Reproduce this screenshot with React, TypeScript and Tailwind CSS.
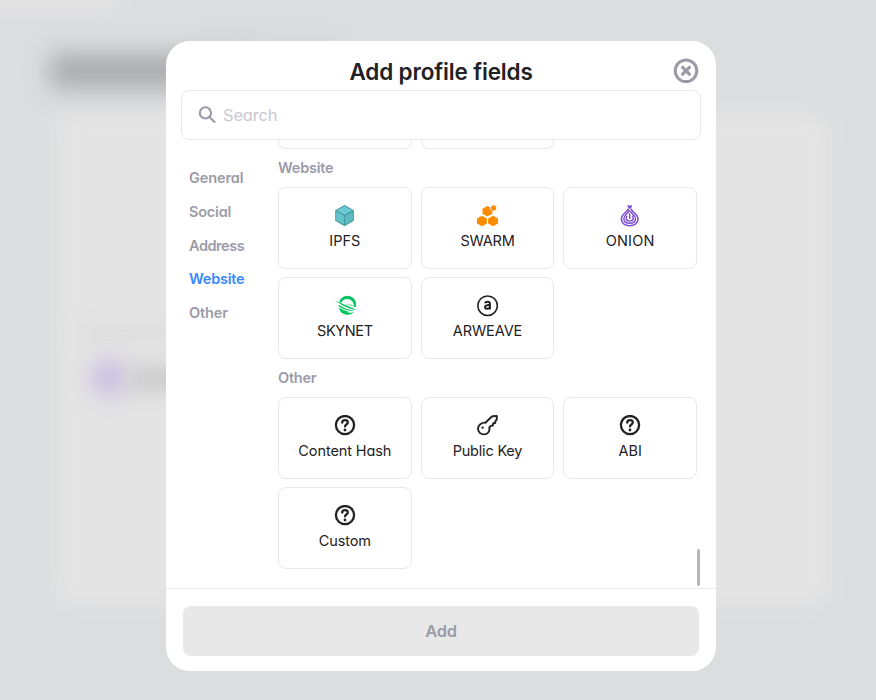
import type { ReactNode } from "react";

const Ipfs = () => (
  <svg width="22" height="22" viewBox="0 0 22 22">
    <path d="M10.5 0 19.9 5.2v10.6L10.5 21.2 1.2 15.8V5.2z" fill="#469ea2" />
    <path d="M10.5 1.2 18.2 5.5 10.5 9.8 2.8 5.5z" fill="#6acad1" />
    <path d="M2.2 6.5 9.9 10.9v8.6L2.2 15.1z" fill="#64c3ca" />
    <path d="M18.9 6.5 11.2 10.9v8.6l7.7-4.4z" fill="#5dbac1" />
  </svg>
);

const Swarm = () => (
  <svg width="22" height="22" viewBox="0 0 22 22" fill="#ff8b00">
    <path d="M5.9 10.7 10.9 13.5v5L5.9 21.2 1 18.5v-5z" />
    <path d="M17.1 10.7 22 13.5v5l-4.9 2.7-5-2.7v-5z" />
    <path d="m11.3 1 2.9 1.6c-.2 1.9.5 2.9 2.2 3.2v3l-5.1 2.8L6.5 8.8V3.8z" />
    <path d="m17.6 0 2.6 1.5v3l-2.6 1.5-2.6-1.5v-3z" />
  </svg>
);

const Onion = () => (
  <svg width="22" height="22" viewBox="0 0 22 22" fill="none" stroke="#7d4fd2" strokeWidth="1.6">
    <path d="M9.5 3.8C8.8 6.7 2.4 9 2.4 13.8c0 4.2 3.5 6.9 8.3 6.9s8.3-2.7 8.3-6.9c0-4.8-6.4-7.1-7.1-10M9 .2l1.1 2.7M12.5.2l-1.2 2.7M10.7.7v3" />
    <path d="M10.5 5.1C9.9 8 4.9 9.9 4.9 13.8c0 2.8 2.3 4.5 5.8 4.5s5.8-1.7 5.8-4.5c0-3.9-4.3-5-5.3-7.6" strokeWidth="1.4" />
    <path d="M10.7 8.6v5.4M8 10.8c-.5.8-.8 1.7-.8 2.8 0 1.6 1.4 2.5 3.5 2.5s3.5-.9 3.5-2.5c0-1.1-.4-2-1.1-2.8" strokeWidth="1.4" />
  </svg>
);

const Skynet = () => (
  <svg width="22" height="22" viewBox="0 0 22 22" fill="#00c65e">
    <path d="M5.2 7A8.6 8.6 0 0 1 21.8 12l-2-.5A6.7 6.7 0 0 0 7.1 7.8z" />
    <path d="M1 5.4 21.4 14.2l-.4.8C14.1 13.2 7.4 10.4 1 5.4z" />
    <path d="M4.7 9.8c4.3 3.2 9.4 4.6 14.4 5.7l-.3.7C13.3 15.1 8.6 13.9 4.7 11.4z" />
    <path d="M4.9 12.8c3.4 1.7 6.5 3.1 9.9 4l-.5.8c2.2.6 4.2.1 5.8-1A8.6 8.6 0 0 1 4.9 12.8z" />
    <path d="m11.2 8.9 2-.4 2 1 1.7-.3 3.8 2.3v.6z" opacity=".55" />
  </svg>
);

const Arweave = () => (
  <svg width="22" height="22" viewBox="0 0 22 22" fill="none" stroke="#222123">
    <circle cx="11.6" cy="10.7" r="9.75" strokeWidth="1.6" />
    <path d="M9 8.3C9.3 7.2 10.1 6.8 11.5 6.8c1.6 0 2.5.8 2.5 2.1v3.7c0 .7.2 1.2.7 1.4M13.8 9.8l-2.5.4c-1.6.2-2.3.7-2.3 1.8s.8 1.7 1.9 1.7c1.8 0 2.9-.9 2.9-2.3" strokeWidth="1.9" />
  </svg>
);

const Question = () => (
  <svg width="22" height="22" viewBox="0 0 22 22" fill="none" stroke="#222123" strokeLinecap="round" strokeLinejoin="round">
    <circle cx="11" cy="10.1" r="9.1" strokeWidth="2.3" />
    <path d="M8.2 7.5c.2-1.6 1.3-2.3 2.8-2.3 1.7 0 2.8.9 2.8 2.3 0 1.9-2.8 2-2.8 3.9" strokeWidth="2.3" />
    <circle cx="11" cy="15" r="1.4" fill="#222123" stroke="none" />
  </svg>
);

const Key = () => (
  <svg width="22" height="22" viewBox="0 0 22 22" fill="none" stroke="#222123" strokeWidth="1.9" strokeLinejoin="round">
    <path d="M9.4 7.7 15.9 1.5Q16.6.9 20.8 1v3.6l-1.3 1.3-.3 2.1-2 .3-.3 2.2-2 .4-1.6 1.6c.8 3.6-1.3 6.7-4.9 6.9C4.6 19.6 2 17 2 13.8 2 10 5.6 7.2 9.4 7.7z" />
    <circle cx="6.6" cy="12.6" r="1.2" fill="#222123" stroke="none" />
  </svg>
);

type Item = { label: string; icon: ReactNode; tracking: string };

const website: Item[] = [
  { label: "IPFS", icon: <Ipfs />, tracking: "tracking-[0px]" },
  { label: "SWARM", icon: <Swarm />, tracking: "tracking-[-0.2px]" },
  { label: "ONION", icon: <Onion />, tracking: "tracking-[0.2px]" },
  { label: "SKYNET", icon: <Skynet />, tracking: "tracking-[-0.35px]" },
  { label: "ARWEAVE", icon: <Arweave />, tracking: "tracking-[-0.1px]" },
];

const other: Item[] = [
  { label: "Content Hash", icon: <Question />, tracking: "tracking-[-0.1px]" },
  { label: "Public Key", icon: <Key />, tracking: "tracking-[-0.2px]" },
  { label: "ABI", icon: <Question />, tracking: "tracking-[-0.1px]" },
  { label: "Custom", icon: <Question />, tracking: "tracking-[-0.1px]" },
];

function Section({ title, items }: { title: string; items: Item[] }) {
  return (
    <section>
      <h2 className="h-[38px] text-[14.5px] font-semibold leading-[37px] tracking-[-0.25px] text-[#9b9ba7]">{title}</h2>
      <div className="grid grid-cols-3 gap-x-[9px] gap-y-2">
        {items.map((item) => (
          <button key={item.label} className="flex h-[82px] flex-col items-center gap-1 rounded-lg border border-[#e8e8e8] pt-[17px]">
            {item.icon}
            <span className={`text-[14.5px] leading-[19px] whitespace-nowrap ${item.tracking}`}>{item.label}</span>
          </button>
        ))}
      </div>
    </section>
  );
}

const nav = [
  { name: "General", tracking: "tracking-[-0.1px]" },
  { name: "Social", tracking: "tracking-[-0.2px]" },
  { name: "Address", tracking: "tracking-[-0.45px]" },
  { name: "Website", tracking: "tracking-[-0.25px]" },
  { name: "Other", tracking: "tracking-[-0.1px]" },
];

export default function App() {
  return (
    <div className="relative flex h-[700px] w-[876px] justify-center overflow-hidden bg-[#dcdddf] pl-[6px] pt-[41px] font-['Inter',sans-serif] text-[#222123] [font-feature-settings:'cv11']">
      <div className="absolute -left-10 -top-10 h-[48px] w-[160px] bg-[#e4e4e4] blur-[10px]" />
      <div className="absolute left-[54px] top-[113px] h-[492px] w-[776px] rounded-2xl bg-[#e4e4e4] blur-[10px]" />
      <div className="absolute left-[50px] top-[54px] h-[34px] w-[200px] bg-[#a9aaac] blur-[12px]" />
      <div className="absolute left-[200px] top-[36px] h-[10px] w-[140px] bg-[#d4d5d7] blur-[8px]" />
      <div className="absolute left-[80px] top-[326px] h-[14px] w-[110px] bg-[#dddddd] blur-[8px]" />
      <div className="absolute left-[90px] top-[359px] h-[38px] w-[38px] rounded-full bg-[#c9bfe3] blur-[11px]" />
      <div className="absolute left-[130px] top-[367px] h-[24px] w-[60px] bg-[#cacaca] blur-[10px]" />

      <main className="relative flex h-[630px] w-[550px] flex-col overflow-hidden rounded-[24px] bg-white">
        <header className="relative flex h-[49px] shrink-0 items-center justify-center pt-[13px]">
          <h1 className="text-[22.5px] font-semibold leading-8 tracking-[-0.15px]">Add profile fields</h1>
          <button className="absolute right-[17px] top-[17px]" aria-label="Close">
            <svg width="26" height="26" viewBox="0 0 26 26" fill="none" stroke="#9b9ba7" strokeWidth="3" strokeLinecap="round">
              <circle cx="13" cy="12.8" r="10.8" />
              <path d="m9.6 9.4 6.8 6.8M16.4 9.4l-6.8 6.8" strokeWidth="3.3" />
            </svg>
          </button>
        </header>
        <label className="mx-[15px] flex h-[50px] shrink-0 items-center gap-[7px] rounded-lg border border-[#e8e8e8] pl-4">
          <svg width="18" height="18" viewBox="0 0 18 18" fill="none" stroke="#9b9ba7" strokeWidth="2.1">
            <circle cx="7.4" cy="6.9" r="5.6" />
            <path d="m11.3 10.9 5.8 5.6" />
          </svg>
          <span className="text-[16.5px] leading-[23px] tracking-[-0.2px] text-[#c9c9cf]">Search</span>
        </label>
        <div className="flex h-[448px] shrink-0 overflow-hidden">
          <nav className="flex w-[112px] shrink-0 flex-col pl-[23px] pt-[21px]">
            {nav.map(({ name, tracking }) => (
              <a key={name} className={`h-[33.75px] text-[14.5px] font-semibold leading-[33.75px] ${tracking} ${name === "Website" ? "text-[#3888ff]" : "text-[#9b9ba7]"}`}>
                {name}
              </a>
            ))}
          </nav>
          <div className="w-[419px] shrink-0">
            <div className="grid h-[9px] grid-cols-3 gap-x-[9px]">
              <div className="rounded-b-lg border border-t-0 border-[#e8e8e8]" />
              <div className="rounded-b-lg border border-t-0 border-[#e8e8e8]" />
            </div>
            <Section title="Website" items={website} />
            <Section title="Other" items={other} />
          </div>
          <div className="mb-[2px] h-[37px] w-[3px] shrink-0 self-end rounded-full bg-[#b5b5bd]" />
        </div>
        <footer className="h-[83px] shrink-0 border-t border-[#e8e8e8] px-[17px] pt-[17px]">
          <button className="h-[50px] w-full rounded-lg bg-[#e8e8e8] text-[16.5px] font-semibold tracking-[-0.2px] text-[#9b9ba7]">Add</button>
        </footer>
      </main>
    </div>
  );
}
